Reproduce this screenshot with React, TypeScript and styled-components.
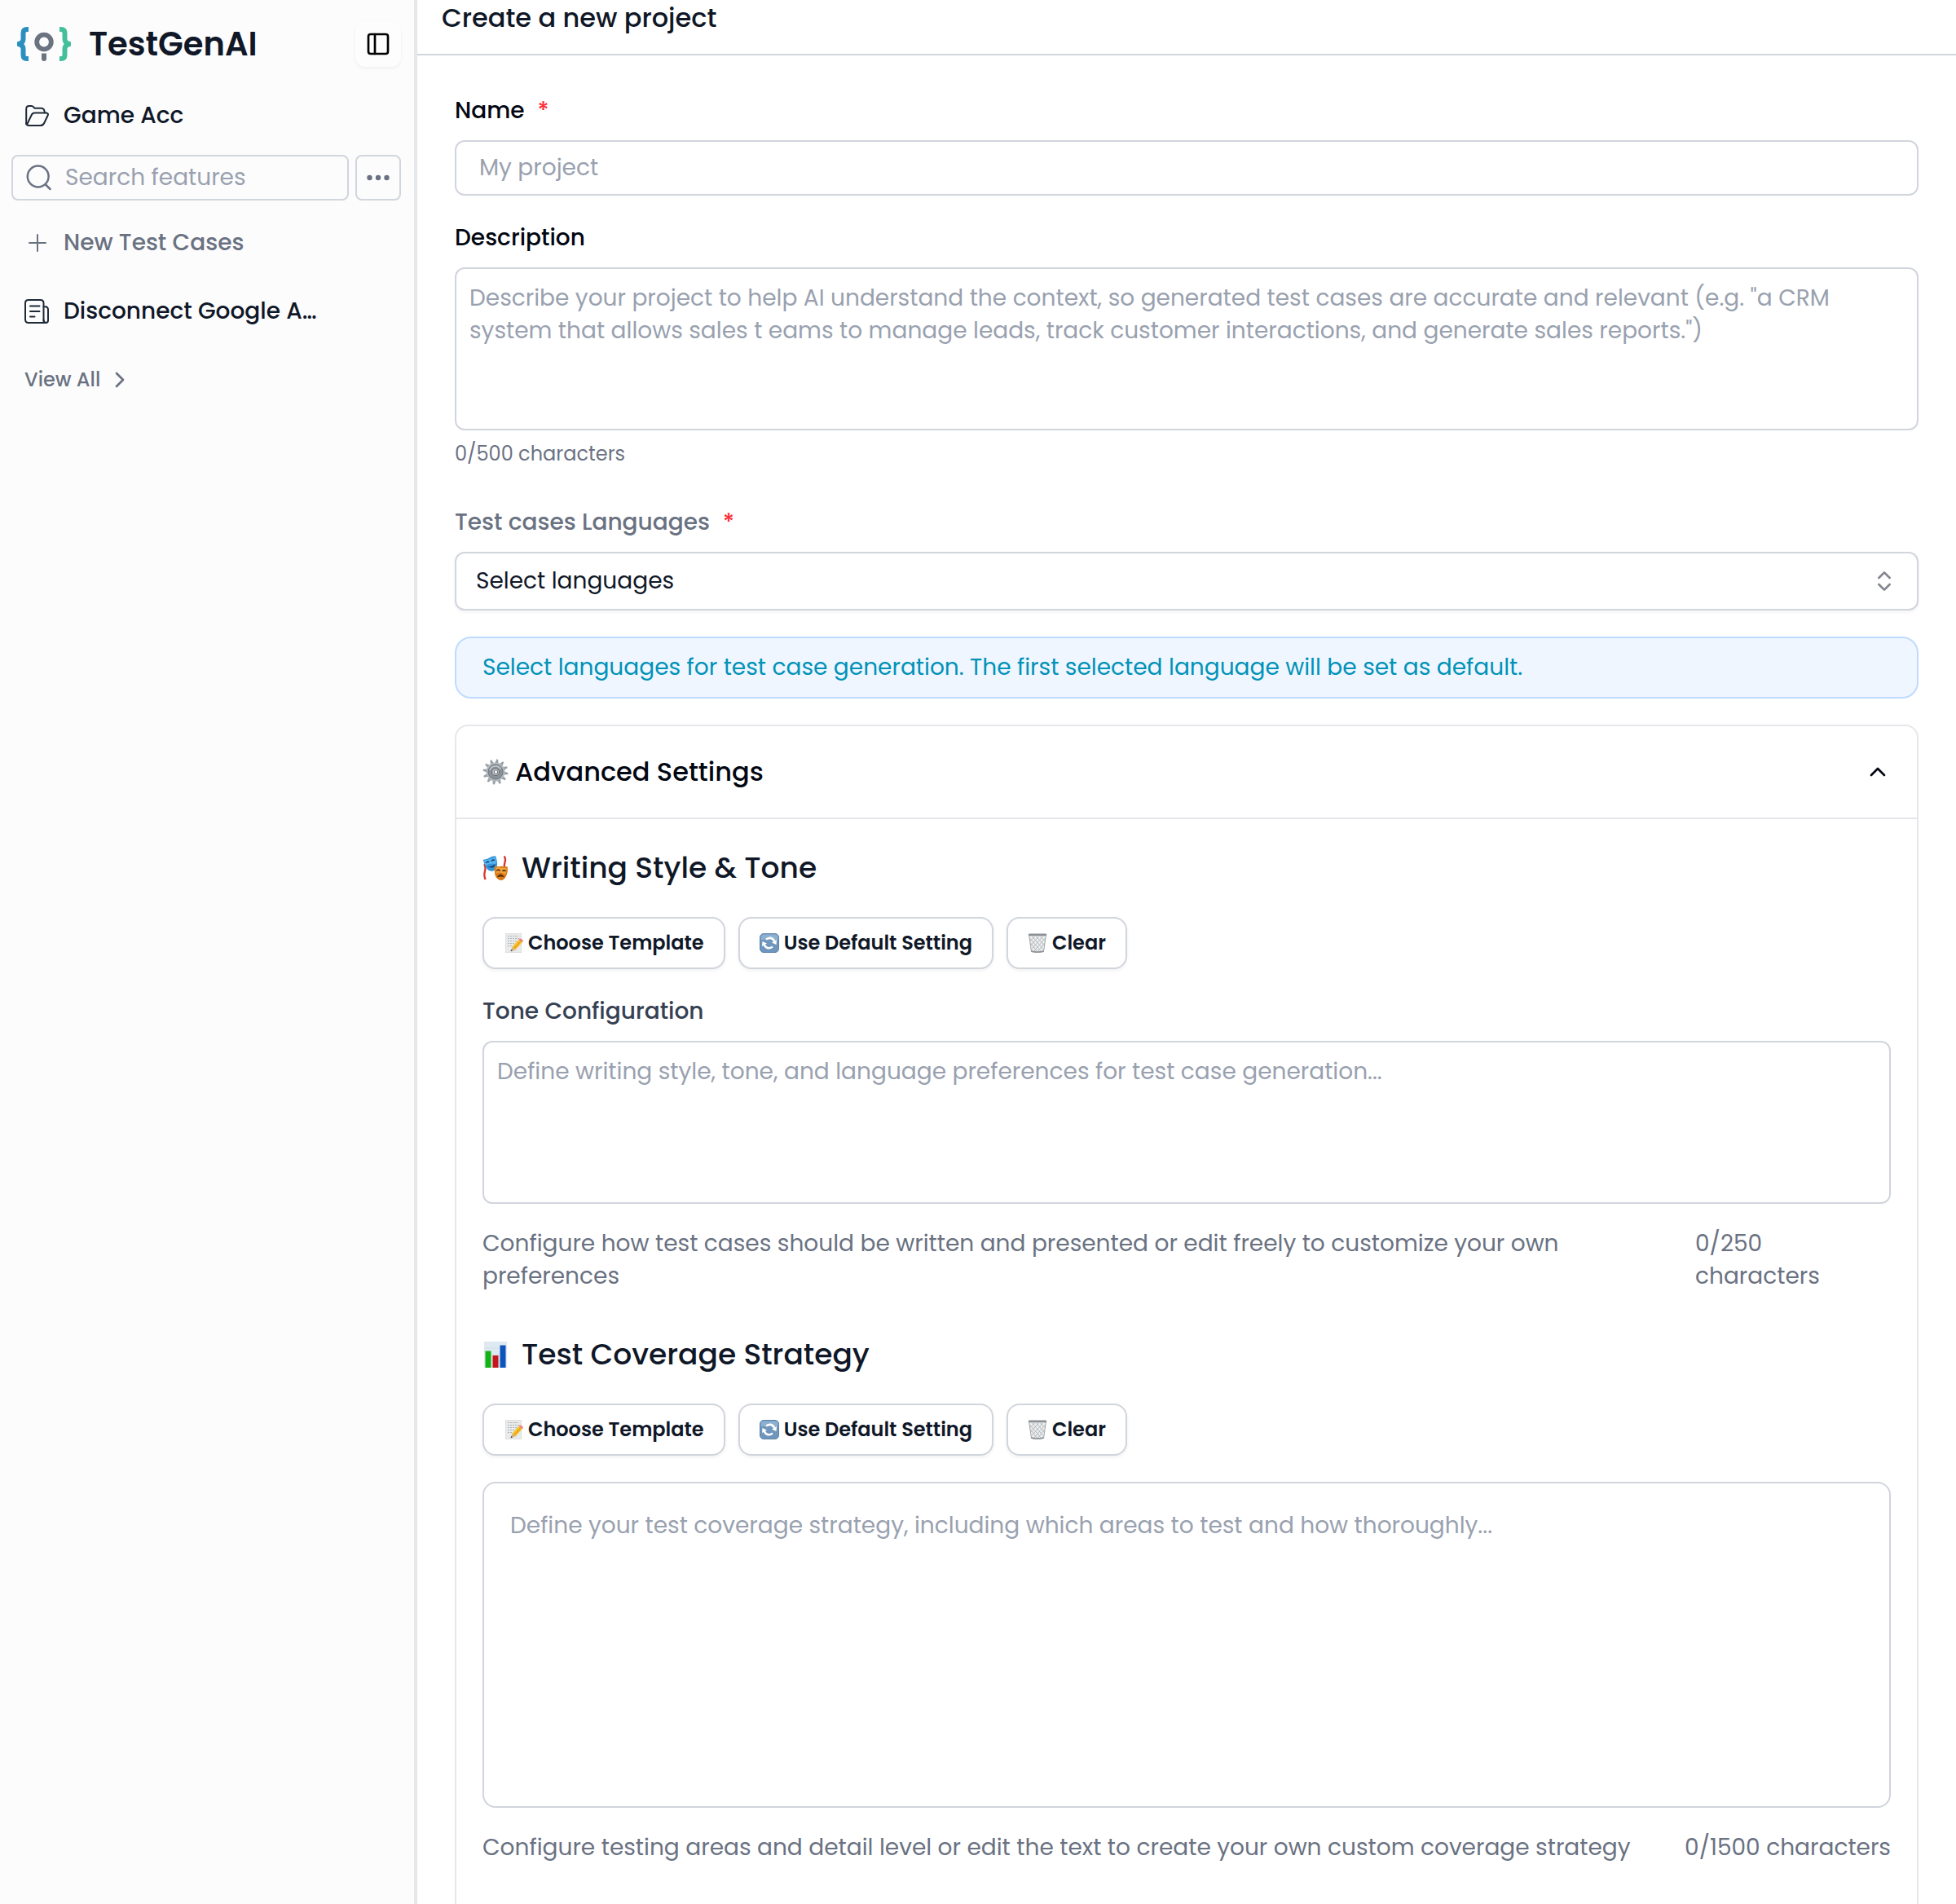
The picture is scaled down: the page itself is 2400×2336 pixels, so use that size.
import React from 'react';
import styled, { createGlobalStyle } from 'styled-components';
import { ChevronRight, ChevronUp, ChevronsUpDown, PanelLeft } from 'lucide-react';

const color = {
  ink: '#101828',
  black: '#030712',
  slate: '#364153',
  muted: '#6a7282',
  placeholder: '#99a1af',
  border: '#d1d5dc',
  line: '#e5e7eb',
};

const GlobalStyle = createGlobalStyle`
  *, *::before, *::after { box-sizing: border-box; }
  body {
    margin: 0;
    background: #ffffff;
    color: ${color.ink};
    font-family: Poppins, Inter, "Liberation Sans", sans-serif;
    font-size: 28px;
    line-height: 40px;
  }
  button, input, textarea, select { font: inherit; color: inherit; margin: 0; }
  h1, h2, h3, p { margin: 0; font-weight: 500; }
`;

const Layout = styled.div`
  display: flex;
  height: 100vh;
  overflow: hidden;
`;

/* ---------- Sidebar ---------- */

const Sidebar = styled.aside`
  flex: none;
  width: 512px;
  display: flex;
  flex-direction: column;
  gap: 32px;
  padding: 26px 16px 26px 14px;
  background: #fcfcfd;
  border-right: 4px solid ${color.line};
`;

const Brand = styled.div`
  display: flex;
  align-items: center;
  gap: 22px;
  padding-left: 7px;
`;

const BrandName = styled.span`
  flex: 1;
  font-size: 40px;
  line-height: 56px;
  font-weight: 600;
`;

const ToggleButton = styled.button`
  display: grid;
  place-items: center;
  width: 56px;
  height: 56px;
  padding: 0;
  border: 0;
  border-radius: 12px;
  background: #fdfdfe;
  color: #000000;
  box-shadow: 0 2px 4px rgba(0, 0, 0, 0.05);
`;

const Nav = styled.nav`
  display: flex;
  flex-direction: column;
  gap: 28px;
`;

const NavGroup = styled.div`
  display: flex;
  flex-direction: column;
`;

const NavLink = styled.a<{ $muted?: boolean }>`
  display: flex;
  align-items: center;
  gap: 18px;
  height: 56px;
  padding: 0 16px;
  color: ${(p) => (p.$muted ? color.muted : color.ink)};
  font-weight: 500;
  text-decoration: none;

  svg { flex: none; }
`;

const NavText = styled.span`
  overflow: hidden;
  text-overflow: ellipsis;
  white-space: nowrap;
`;

const ViewAll = styled(NavLink)`
  font-size: 24px;
  gap: 8px;
`;

const SearchRow = styled.div`
  display: flex;
  gap: 8px;
  margin: 20px 0 24px;
`;

const SearchBox = styled.label`
  flex: 1;
  min-width: 0;
  display: flex;
  align-items: center;
  gap: 14px;
  height: 56px;
  padding: 0 16px;
  border: 2px solid ${color.border};
  border-radius: 8px;

  svg { flex: none; }
`;

const SearchInput = styled.input`
  flex: 1;
  min-width: 0;
  padding: 0;
  border: 0;
  outline: 0;
  background: transparent;
  &::placeholder { color: ${color.placeholder}; opacity: 1; }
`;

const MoreButton = styled.button`
  display: grid;
  place-items: center;
  width: 56px;
  height: 56px;
  padding: 0;
  border: 2px solid ${color.border};
  border-radius: 8px;
  background: transparent;
`;

/* ---------- Main form ---------- */

const Main = styled.main`
  flex: 1;
  min-width: 0;
  display: flex;
  flex-direction: column;
`;

const PageHeader = styled.header`
  flex: none;
  padding: 0 30px 22px;
  border-bottom: 2px solid ${color.border};
`;

const PageTitle = styled.h1`
  font-size: 32px;
  line-height: 44px;
`;

const Form = styled.form`
  flex: none;
  display: flex;
  flex-direction: column;
  gap: 32px;
  padding: 48px 46px;
`;

const Field = styled.div`
  display: flex;
  flex-direction: column;
`;

const Label = styled.label<{ $tone?: string }>`
  margin-bottom: 16px;
  color: ${(p) => p.$tone ?? color.black};
  font-weight: 500;
`;

const Required = styled.span`
  margin-left: 16px;
  color: #fb2c36;
`;

const TextInput = styled.input`
  width: 100%;
  height: 68px;
  padding: 0 28px;
  border: 2px solid ${color.border};
  border-radius: 12px;
  background: #ffffff;
  &::placeholder { color: ${color.placeholder}; opacity: 1; }
`;

const TextArea = styled.textarea<{ $large?: boolean }>`
  display: block;
  width: 100%;
  height: ${(p) => (p.$large ? 400 : 200)}px;
  padding: ${(p) => (p.$large ? '32px' : '16px')};
  border: 2px solid ${color.border};
  border-radius: ${(p) => (p.$large ? 16 : 12)}px;
  background: #ffffff;
  resize: none;
  &::placeholder { color: ${color.placeholder}; opacity: 1; }
`;

const Counter = styled.p`
  margin: 13px 0 16px;
  color: ${color.muted};
  font-size: 24px;
  line-height: 32px;
  font-weight: 400;
`;

const SelectWrap = styled.div`
  display: grid;
  align-items: center;

  > * { grid-area: 1 / 1; }
  > svg {
    justify-self: end;
    margin-right: 26px;
    color: #83868f;
    pointer-events: none;
  }
`;

const Select = styled.select`
  appearance: none;
  width: 100%;
  height: 72px;
  padding: 0 24px;
  border: 2px solid ${color.border};
  border-radius: 12px;
  background: #ffffff;
  box-shadow: 0 2px 4px rgba(0, 0, 0, 0.05);
`;

const Notice = styled.p`
  padding: 16px 32px;
  border: 2px solid #bedbff;
  border-radius: 20px;
  background: #eff6ff;
  color: #0092b8;
  font-weight: 400;
`;

const Panel = styled.section`
  border: 2px solid ${color.line};
  border-radius: 16px;
`;

const PanelToggle = styled.button`
  display: flex;
  align-items: center;
  gap: 8px;
  width: 100%;
  height: 114px;
  padding: 0 32px;
  border: 0;
  border-bottom: 2px solid ${color.line};
  background: transparent;
  color: ${color.black};
  font-size: 32px;
  font-weight: 500;
  text-align: left;

  > span { flex: 1; }
`;

const PanelBody = styled.div`
  display: flex;
  flex-direction: column;
  gap: 48px;
  padding: 32px 32px 96px;
`;

const Section = styled.section`
  display: flex;
  flex-direction: column;
`;

const SectionTitle = styled.h2`
  display: flex;
  align-items: center;
  gap: 16px;
  margin-bottom: 32px;
  font-size: 36px;
  line-height: 56px;
`;

const Actions = styled.div`
  display: flex;
  gap: 16px;
  margin-bottom: 32px;
`;

const ActionButton = styled.button`
  display: flex;
  align-items: center;
  gap: 6px;
  height: 64px;
  padding: 0 24px;
  border: 2px solid ${color.border};
  border-radius: 16px;
  background: #ffffff;
  box-shadow: 0 2px 4px rgba(0, 0, 0, 0.06);
  font-size: 24px;
  font-weight: 600;
`;

const HelpRow = styled.div`
  display: flex;
  justify-content: space-between;
  margin-top: 29px;
  color: ${color.muted};
`;

const HelpText = styled.p<{ $narrow?: boolean }>`
  max-width: ${(p) => (p.$narrow ? '1400px' : 'none')};
  font-weight: 400;
`;

const HelpCount = styled.p<{ $narrow?: boolean }>`
  flex: none;
  width: ${(p) => (p.$narrow ? '240px' : 'auto')};
  padding-right: ${(p) => (p.$narrow ? '60px' : '0')};
  font-weight: 400;
`;

/* ---------- Drawings ---------- */

const Logo = () => (
  <svg width="66" height="42" viewBox="0 0 66 42" fill="none" aria-hidden="true">
    <g strokeWidth="6">
      <path d="M14 3H12Q7.500 3 7.500 7.500V15Q7.500 19.500 2 21Q7.500 22.500 7.500 27V34.500Q7.500 39 12 39H14" stroke="#2b90bf" />
      <path d="M52 3H54Q58.500 3 58.500 7.500V15Q58.500 19.500 64 21Q58.500 22.500 58.500 27V34.500Q58.500 39 54 39H52" stroke="#43c09a" />
    </g>
    <circle cx="33" cy="18.500" r="8.800" stroke="#6b7280" strokeWidth="5.800" />
    <path d="M30 32.500H36V39Q36 42 33 42Q30 42 30 39Z" fill="#6b7280" />
  </svg>
);

const FolderIcon = () => (
  <svg width="30" height="28" viewBox="0 0 30 28" fill="none" stroke="#1f2937" strokeWidth="2" strokeLinejoin="round" strokeLinecap="round" aria-hidden="true">
    <path d="M2.200 24V5.500Q2.200 2 5.700 1.900H8.500Q10 1.900 11 3.100L12.300 4.700H20.500Q24.700 4.700 24.900 10.400" />
    <path d="M3 25L8.600 13.200Q10 10.600 12.600 10.600H26.500Q30 10.800 28.500 14L24.300 22.800Q22.800 26.100 19.500 26.100H5.500Q2.400 26.100 2.200 23" />
  </svg>
);

const DocIcon = () => (
  <svg width="30" height="30" viewBox="0 0 30 30" fill="none" stroke="#1f2937" strokeWidth="2" strokeLinecap="round" strokeLinejoin="round" aria-hidden="true">
    <path d="M5 1H19.500Q23.500 1 23.500 5V25.500Q23.500 29 26.300 29H5Q1 29 1 25V5Q1 1 5 1Z" />
    <path d="M23.500 9.300H25.300Q29 9.300 29 13V26Q29 29 26.300 29Q23.500 29 23.500 25.500" />
    <path d="M7 8.500H18.500M7 15H18.500M7 21.500H12.500" />
  </svg>
);

const PlusIcon = () => (
  <svg width="30" height="30" viewBox="0 0 30 30" stroke="#6a7282" strokeWidth="2" strokeLinecap="round" aria-hidden="true">
    <path d="M6 15H26M16 5V25" />
  </svg>
);

const SearchIcon = () => (
  <svg width="34" height="34" viewBox="0 0 34 34" fill="none" stroke="#6a7282" strokeWidth="2.500" strokeLinecap="round" aria-hidden="true">
    <circle cx="14.700" cy="15.500" r="12.900" />
    <path d="M24 25.500L29.500 31" />
  </svg>
);

const DotsIcon = () => (
  <svg width="28" height="8" viewBox="0 0 28 8" fill="#6a7282" aria-hidden="true">
    <circle cx="3.500" cy="4" r="3.200" />
    <circle cx="14" cy="4" r="3.200" />
    <circle cx="24.500" cy="4" r="3.200" />
  </svg>
);

const teeth = Array.from({ length: 12 }, (_, i) => i * 30);

const GearIcon = () => (
  <svg width="32" height="32" viewBox="0 0 32 32" aria-hidden="true">
    <g fill="#99a0a6">
      {teeth.map((a) => (
        <path key={a} d="M13.800 6L15 0.500H17L18.200 6Z" transform={`rotate(${a + 8} 16 16)`} />
      ))}
    </g>
    <circle cx="16" cy="16" r="11.500" fill="#b3b9be" />
    <circle cx="16" cy="16" r="9" fill="#8b9298" stroke="#6d747a" strokeWidth="1" />
    <path d="M9 14A7.300 7.300 0 0 1 22.500 13" stroke="#c3c9cd" strokeWidth="1.600" fill="none" />
    <circle cx="16" cy="16" r="4.600" fill="#b9bfc4" stroke="#636a70" strokeWidth="1" />
    <circle cx="16.500" cy="16" r="2.200" fill="#ffffff" stroke="#4b5157" strokeWidth="0.800" />
  </svg>
);

const MasksIcon = () => (
  <svg width="32" height="32" viewBox="0 0 33 32" fill="none" aria-hidden="true">
    <path d="M2.200 11Q4.500 15 3 20T3.600 30.500" stroke="#d63a2e" strokeWidth="2.300" />
    <path d="M27.500 1Q30 5 28.300 9T29 17" stroke="#d63a2e" strokeWidth="2.300" />
    <path d="M0.800 5.500Q6 5 9 2.800T16.600 0.800Q19.500 9 18.300 14T12.500 20Q7 20 4.300 15T0.800 5.500Z" fill="#2f95dc" />
    <path d="M2 6.500Q9 5.500 16 2Q17.500 8 16.500 11Q10 9 4 13Q2.500 10 2 6.500Z" fill="#57b5f0" />
    <path d="M4.500 9.500Q6.300 7 8.500 8.500M11.200 7.300Q13 4.800 15.200 6.300" stroke="#12325c" strokeWidth="1.500" />
    <path d="M6.500 13.500Q12 15.500 16 10.500Q15.500 14.500 12.300 15.500Q9 16 6.500 13.500Z" fill="#12325c" />
    <path d="M15.500 13.500Q20 14.500 23.500 13.800T31.800 14.500Q32.500 22 29.500 27T22.500 31.500Q17 30 15.700 24T15.500 13.500Z" fill="#d8791b" />
    <path d="M17 15Q24 16 30.500 16Q31 21 28.500 24Q22 20 17.500 23Q16.600 19 17 15Z" fill="#f0a23c" />
    <path d="M17.800 19.500Q20 17 22.300 19.500M25.300 20Q27.500 17.500 29.500 20" stroke="#4a2508" strokeWidth="1.500" />
    <path d="M19 27Q23 22 27 27Q23 25.500 19 27Z" fill="#4a2508" stroke="#4a2508" strokeWidth="0.800" />
  </svg>
);

const ChartIcon = () => (
  <svg width="32" height="32" viewBox="0 0 32 32" aria-hidden="true">
    <rect x="2" width="28" height="32" fill="#dfe9f2" />
    <path d="M2 8H30M2 16H30M2 24H30" stroke="#c9d6e2" strokeWidth="0.600" />
    <rect x="3.500" y="11.500" width="7" height="20.500" fill="#12b312" />
    <rect x="12.500" y="17" width="7" height="15" fill="#c4161c" />
    <rect x="21.500" y="4.500" width="7" height="27.500" fill="#0d55bd" />
  </svg>
);

const MemoIcon = () => (
  <svg width="24" height="24" viewBox="0 0 24 24" fill="none" aria-hidden="true">
    <rect x="2.300" y="0.300" width="19.400" height="23.400" fill="#e9eaeb" stroke="#d3d5d7" strokeWidth="0.600" />
    <path d="M5 3.500H18M5 6.500H19M5 9.500H16M5 12.500H14M5 15.500H11" stroke="#b1b4b8" strokeWidth="1" strokeDasharray="2 1" />
    <path d="M10.500 16.500L18.500 7.500L22.700 11.300L14.700 20.200Z" fill="#f7c32e" />
    <path d="M13 18.500L21 9.700" stroke="#e39a1a" strokeWidth="1.200" />
    <path d="M18.500 7.500L19.500 6.500Q21 6 22.600 7.500T23.700 10.200L22.700 11.300Z" fill="#e88585" />
    <path d="M10.500 16.500L14.700 20.200L8.500 22.200Z" fill="#d9b27c" />
    <path d="M9.300 20.100L10.900 21.500L8.500 22.200Z" fill="#3c3c3c" />
  </svg>
);

const RefreshIcon = () => (
  <svg width="24" height="24" viewBox="0 0 24 24" fill="none" aria-hidden="true">
    <rect x="0.500" y="0.500" width="23" height="23" rx="4.500" fill="#6f96bd" stroke="#5f84aa" />
    <path d="M1.500 5Q1.500 1.500 5 1.500H19Q22.500 1.500 22.500 5V8H1.500Z" fill="#8db0d0" />
    <path d="M8 7.500Q14.500 3 18.500 10M16 16.500Q9.500 21 5.500 14" stroke="#ffffff" strokeWidth="2.600" />
    <path d="M21 8L20.500 14L15 11.500ZM3 16L3.500 10L9 12.500Z" fill="#ffffff" />
  </svg>
);

const TrashIcon = () => (
  <svg width="24" height="24" viewBox="0 0 24 24" fill="none" aria-hidden="true">
    <path d="M1.500 2L4.500 22.500Q12 25 19.500 22.500L22.500 2Z" fill="#eceeef" stroke="#9a9ea3" strokeWidth="0.900" />
    <path d="M2.500 6L17 23M5.500 4L19.500 20M10.500 4L20.500 15M15.500 4L21.500 10M3.500 12L12 23M21.500 6L7 23M18.500 4L4.500 20M13.500 4L3.500 15M8.500 4L2.500 10M20.500 12L12 23" stroke="#a9adb1" strokeWidth="0.800" />
    <path d="M4 21Q12 23.500 20 21L19.600 23Q12 24.500 4.400 23Z" fill="#8d9196" />
    <rect x="0.800" y="0.600" width="22.400" height="2.600" rx="1.200" fill="#8b9096" />
  </svg>
);

/* ---------- Page ---------- */

const TemplateActions = () => (
  <Actions>
    <ActionButton type="button"><MemoIcon />Choose Template</ActionButton>
    <ActionButton type="button"><RefreshIcon />Use Default Setting</ActionButton>
    <ActionButton type="button"><TrashIcon />Clear</ActionButton>
  </Actions>
);

export default function App() {
  return (
    <>
      <GlobalStyle />
      <Layout>
        <Sidebar>
          <Brand>
            <Logo />
            <BrandName>TestGenAI</BrandName>
            <ToggleButton type="button" aria-label="Toggle sidebar">
              <PanelLeft size={32} strokeWidth={2} />
            </ToggleButton>
          </Brand>
          <Nav>
            <NavGroup>
              <NavLink href="#project"><FolderIcon /><NavText>Game Acc</NavText></NavLink>
              <SearchRow>
                <SearchBox>
                  <SearchIcon />
                  <SearchInput type="text" aria-label="Search features" placeholder="Search features" />
                </SearchBox>
                <MoreButton type="button" aria-label="More options"><DotsIcon /></MoreButton>
              </SearchRow>
              <NavLink href="#new" $muted><PlusIcon /><NavText>New Test Cases</NavText></NavLink>
            </NavGroup>
            <NavLink href="#feature"><DocIcon /><NavText>Disconnect Google A…</NavText></NavLink>
            <ViewAll href="#all" $muted>View All<ChevronRight size={32} strokeWidth={2} /></ViewAll>
          </Nav>
        </Sidebar>

        <Main>
          <PageHeader>
            <PageTitle>Create a new project</PageTitle>
          </PageHeader>

          <Form>
            <Field>
              <Label htmlFor="name">Name<Required>*</Required></Label>
              <TextInput id="name" type="text" placeholder="My project" />
            </Field>

            <Field>
              <Label htmlFor="description">Description</Label>
              <TextArea
                id="description"
                placeholder={'Describe your project to help AI understand the context, so generated test cases are accurate and relevant (e.g. "a CRM system that allows sales t eams to manage leads, track customer interactions, and generate sales reports.")'}
              />
              <Counter>0/500 characters</Counter>
            </Field>

            <Field>
              <Label htmlFor="languages" $tone={color.muted}>Test cases Languages<Required>*</Required></Label>
              <SelectWrap>
                <Select id="languages" defaultValue="">
                  <option value="">Select languages</option>
                </Select>
                <ChevronsUpDown size={32} strokeWidth={2} />
              </SelectWrap>
            </Field>

            <Notice>
              Select languages for test case generation. The first selected language will be set as default.
            </Notice>

            <Panel>
              <PanelToggle type="button" aria-expanded="true">
                <GearIcon />
                <span>Advanced Settings</span>
                <ChevronUp size={32} strokeWidth={2} />
              </PanelToggle>

              <PanelBody>
                <Section>
                  <SectionTitle><MasksIcon />Writing Style &amp; Tone</SectionTitle>
                  <TemplateActions />
                  <Label htmlFor="tone" $tone={color.slate}>Tone Configuration</Label>
                  <TextArea id="tone" placeholder="Define writing style, tone, and language preferences for test case generation..." />
                  <HelpRow>
                    <HelpText $narrow>
                      Configure how test cases should be written and presented or edit freely to customize your own preferences
                    </HelpText>
                    <HelpCount $narrow>0/250 characters</HelpCount>
                  </HelpRow>
                </Section>

                <Section>
                  <SectionTitle><ChartIcon />Test Coverage Strategy</SectionTitle>
                  <TemplateActions />
                  <TextArea
                    $large
                    aria-label="Test coverage strategy"
                    placeholder="Define your test coverage strategy, including which areas to test and how thoroughly..."
                  />
                  <HelpRow>
                    <HelpText>
                      Configure testing areas and detail level or edit the text to create your own custom coverage strategy
                    </HelpText>
                    <HelpCount>0/1500 characters</HelpCount>
                  </HelpRow>
                </Section>
              </PanelBody>
            </Panel>
          </Form>
        </Main>
      </Layout>
    </>
  );
}
